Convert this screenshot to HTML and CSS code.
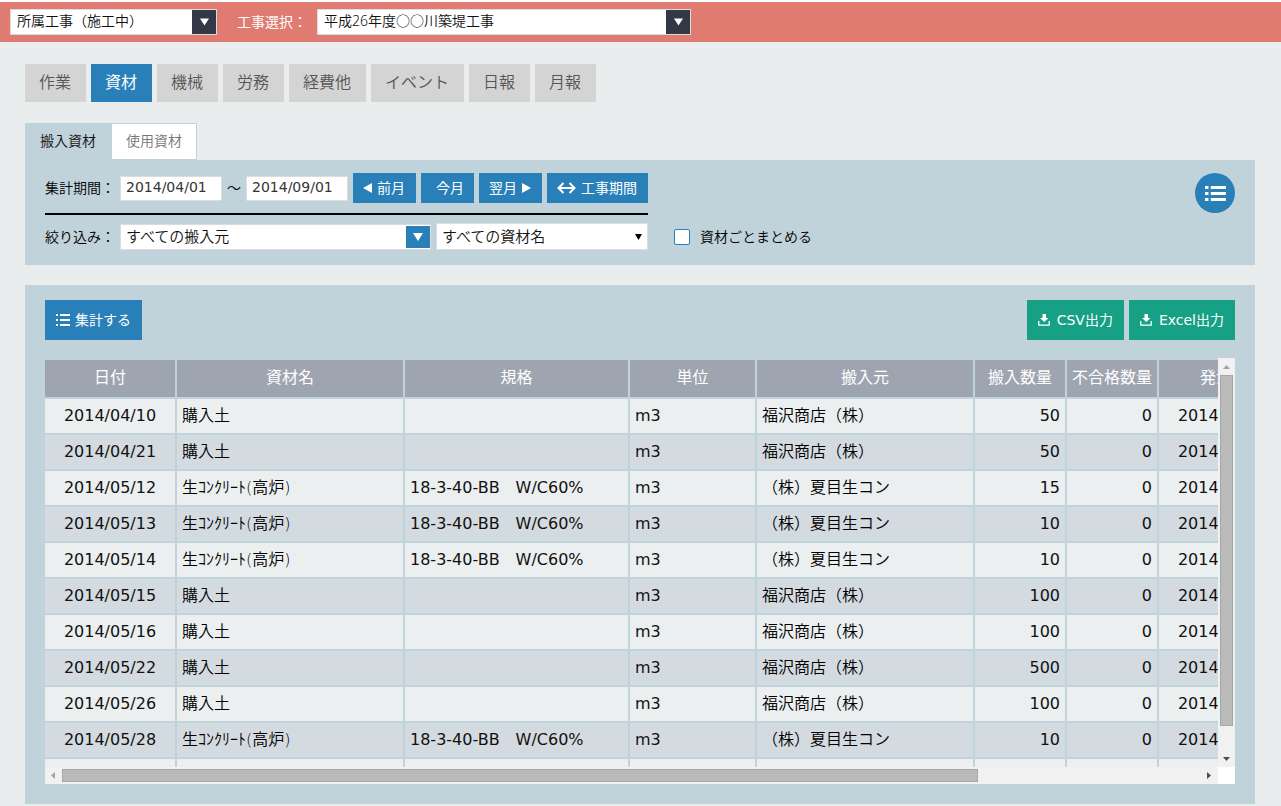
FILE: index.html
```html
<!DOCTYPE html>
<html lang="ja">
<head>
<meta charset="utf-8">
<title>搬入資材</title>
<link rel="stylesheet" href="styles.css">
</head>
<body>
<svg class="defs" aria-hidden="true">
  <symbol id="down" viewBox="0 0 10 8"><path d="M0 0h10L5 8z" fill="currentColor"/></symbol>
  <symbol id="list-thin" viewBox="0 0 14 12"><path d="M0 0h2v2H0zM4 0h10v2H4zM0 5h2v2H0zM4 5h10v2H4zM0 10h2v2H0zM4 10h10v2H4z" fill="currentColor"/></symbol>
  <symbol id="download" viewBox="0 0 12 12"><path d="M4.500 0h3.500v4h2.500L6.250 8 2 4h2.500z" fill="currentColor"/><path d="M.75 7v4.200h10.500V7" fill="none" stroke="currentColor" stroke-width="1.300"/></symbol>
</svg>

<header class="topbar">
  <div class="select select-kind">
    <select aria-label="工事区分"><option>所属工事（施工中）</option></select>
    <span class="arrow"><svg width="9" height="8"><use href="#down"/></svg></span>
  </div>
  <label for="project">工事選択：</label>
  <div class="select select-project">
    <select id="project"><option>平成26年度○○川築堤工事</option></select>
    <span class="arrow"><svg width="9" height="8"><use href="#down"/></svg></span>
  </div>
</header>

<main class="content">
  <nav class="tabs">
    <a href="#">作業</a>
    <a href="#" class="active">資材</a>
    <a href="#">機械</a>
    <a href="#">労務</a>
    <a href="#">経費他</a>
    <a href="#">イベント</a>
    <a href="#">日報</a>
    <a href="#">月報</a>
  </nav>

  <nav class="subtabs">
    <a href="#" class="active">搬入資材</a>
    <a href="#">使用資材</a>
  </nav>

  <section class="panel filter">
    <div class="filter-grid">
      <div class="row period">
        <label class="caption" for="from">集計期間：</label>
        <input class="date" id="from" type="text" value="2014/04/01">
        <span class="tilde">～</span>
        <input class="date" type="text" value="2014/09/01" aria-label="終了日">
        <button class="btn month"><svg width="9" height="10" viewBox="0 0 9 10"><path d="M9 0v10L0 5z" fill="currentColor"/></svg>前月</button>
        <button class="btn this-month">今月</button>
        <button class="btn month">翌月<svg width="9" height="10" viewBox="0 0 9 10"><path d="M0 0v10l9-5z" fill="currentColor"/></svg></button>
        <button class="btn span"><svg width="19" height="12" viewBox="0 0 19 12"><path d="M2 6h15M6.500 1L1.500 6l5 5M12.500 1l5 5-5 5" fill="none" stroke="currentColor" stroke-width="2"/></svg>工事期間</button>
      </div>
      <div class="row narrow">
        <label class="caption" for="source">絞り込み：</label>
        <div class="select select-source">
          <select id="source"><option>すべての搬入元</option></select>
          <span class="arrow"><svg width="10" height="8"><use href="#down"/></svg></span>
        </div>
        <div class="select select-material">
          <select aria-label="資材名"><option>すべての資材名</option></select>
          <span class="arrow"><svg width="7" height="6" viewBox="0 0 7 6"><path d="M0 0h7L3.500 6z" fill="currentColor"/></svg></span>
        </div>
      </div>
      <label class="group"><input type="checkbox">資材ごとまとめる</label>
    </div>
    <button class="round" aria-label="一覧"><svg width="21" height="15" viewBox="0 0 21 15"><path d="M0 0h3v3H0zM5 0h13v3H5zM0 6h3v3H0zM5 6h13v3H5zM0 12h3v3H0zM5 12h13v3H5z" transform="scale(1.160 1)" fill="currentColor"/></svg></button>
  </section>

  <section class="panel result">
    <div class="actions">
      <button class="btn tall"><svg width="14" height="12"><use href="#list-thin"/></svg>集計する</button>
      <div class="exports">
        <button class="btn tall green"><svg width="12" height="12"><use href="#download"/></svg>CSV出力</button>
        <button class="btn tall green"><svg width="12" height="12"><use href="#download"/></svg>Excel出力</button>
      </div>
    </div>
    <div class="scroller">
      <div class="viewport">
        <table>
          <colgroup><col class="c-date"><col class="c-name"><col class="c-spec"><col class="c-unit"><col class="c-source"><col class="c-qty"><col class="c-qty"><col class="c-date"></colgroup>
          <thead>
            <tr><th>日付</th><th>資材名</th><th>規格</th><th>単位</th><th>搬入元</th><th>搬入数量</th><th>不合格数量</th><th>発注日</th></tr>
          </thead>
          <tbody>
            <tr><td>2014/04/10</td><td>購入土</td><td></td><td>m3</td><td>福沢商店（株）</td><td>50</td><td>0</td><td>2014/04/10</td></tr>
            <tr><td>2014/04/21</td><td>購入土</td><td></td><td>m3</td><td>福沢商店（株）</td><td>50</td><td>0</td><td>2014/04/21</td></tr>
            <tr><td>2014/05/12</td><td>生ｺﾝｸﾘｰﾄ(高炉)</td><td>18-3-40-BB　W/C60%</td><td>m3</td><td>（株）夏目生コン</td><td>15</td><td>0</td><td>2014/05/12</td></tr>
            <tr><td>2014/05/13</td><td>生ｺﾝｸﾘｰﾄ(高炉)</td><td>18-3-40-BB　W/C60%</td><td>m3</td><td>（株）夏目生コン</td><td>10</td><td>0</td><td>2014/05/13</td></tr>
            <tr><td>2014/05/14</td><td>生ｺﾝｸﾘｰﾄ(高炉)</td><td>18-3-40-BB　W/C60%</td><td>m3</td><td>（株）夏目生コン</td><td>10</td><td>0</td><td>2014/05/14</td></tr>
            <tr><td>2014/05/15</td><td>購入土</td><td></td><td>m3</td><td>福沢商店（株）</td><td>100</td><td>0</td><td>2014/05/15</td></tr>
            <tr><td>2014/05/16</td><td>購入土</td><td></td><td>m3</td><td>福沢商店（株）</td><td>100</td><td>0</td><td>2014/05/16</td></tr>
            <tr><td>2014/05/22</td><td>購入土</td><td></td><td>m3</td><td>福沢商店（株）</td><td>500</td><td>0</td><td>2014/05/22</td></tr>
            <tr><td>2014/05/26</td><td>購入土</td><td></td><td>m3</td><td>福沢商店（株）</td><td>100</td><td>0</td><td>2014/05/26</td></tr>
            <tr><td>2014/05/28</td><td>生ｺﾝｸﾘｰﾄ(高炉)</td><td>18-3-40-BB　W/C60%</td><td>m3</td><td>（株）夏目生コン</td><td>10</td><td>0</td><td>2014/05/28</td></tr>
            <tr><td></td><td></td><td></td><td></td><td></td><td></td><td></td><td></td></tr>
          </tbody>
        </table>
      </div>
      <div class="bar vertical">
        <svg width="7" height="4" viewBox="0 0 7 4"><path d="M0 4h7L3.500 0z" fill="#a3a3a3"/></svg>
        <div class="track"><div class="thumb"></div></div>
        <svg width="7" height="4" viewBox="0 0 7 4"><path d="M0 0h7L3.500 4z" fill="#505050"/></svg>
      </div>
      <div class="bar horizontal">
        <svg width="4" height="7" viewBox="0 0 4 7"><path d="M4 0v7L0 3.500z" fill="#a3a3a3"/></svg>
        <div class="track"><div class="thumb"></div></div>
        <svg width="4" height="7" viewBox="0 0 4 7"><path d="M0 0v7l4-3.500z" fill="#505050"/></svg>
      </div>
      <div class="corner"></div>
    </div>
  </section>
</main>
</body>
</html>
```

FILE: styles.css
```css
* { box-sizing: border-box; }

body {
  margin: 0;
  background: #e9edee;
  color: #000;
  border-top: 2px solid #fff;
  font-family: "Noto Sans", "Noto Sans CJK JP", sans-serif;
  font-size: 14px;
  font-weight: 350;
  line-height: 20px;
}

.defs { display: none; }

a { color: inherit; text-decoration: none; }

button, input, select { font: inherit; margin: 0; }

/* Drop-downs */
.select { position: relative; }

.select select {
  display: block;
  width: 100%;
  height: 26px;
  padding: 0 30px 2px 6px;
  border: 1px solid #dcdcdc;
  border-radius: 0;
  background: #fff;
  color: #111;
  appearance: none;
}

.arrow {
  position: absolute;
  top: 1px;
  right: 1px;
  bottom: 1px;
  width: 24px;
  display: flex;
  align-items: center;
  justify-content: center;
  background: #323845;
  color: #fff;
  pointer-events: none;
}

/* Top bar */
.topbar {
  display: flex;
  align-items: center;
  height: 40px;
  padding: 0 10px;
  background: #df7b71;
  color: #fff;
}

.topbar label { padding: 0 10px 0 20px; font-weight: 400; }
.select-kind { width: 207px; }
.select-project { width: 374px; }

.content { padding: 22px 26px 2px 25px; }

/* Tabs */
.tabs { display: flex; gap: 5px; margin-bottom: 21px; }

.tabs a {
  padding: 6px 15px 8px 14px;
  background: #d4d4d4;
  color: #555;
  font-size: 16px;
  line-height: 24px;
}

.tabs a.active { background: #2980b9; color: #fff; font-weight: 400; }

.subtabs { display: flex; }

.subtabs a {
  padding: 7px 14px 8px;
  border: solid #c0d2da;
  border-width: 1px 1px 1px 0;
  background: #fff;
  color: #777;
}

.subtabs a.active { padding: 7px 15px 8px; background: #c0d2da; color: #111; }

.panel { background: #c0d2da; }

/* Filter */
.filter {
  display: flex;
  justify-content: space-between;
  align-items: flex-start;
  padding: 13px 20px 15px;
}

.filter-grid {
  display: grid;
  grid-template-columns: auto auto;
  column-gap: 26px;
  row-gap: 8px;
}

.row { display: flex; align-items: center; gap: 5px; }
.period { padding-bottom: 10px; border-bottom: 2px solid #000; }
.narrow { grid-row: 2; align-items: flex-end; }
.caption { width: 70px; }
.narrow .caption { line-height: 26px; }
.tilde { width: 14px; }

.date {
  width: 102px;
  height: 25px;
  padding: 0 5px 2px;
  border: 1px solid #dcdcdc;
  background: #fff;
  color: #333;
  font-family: "DejaVu Sans", sans-serif;
  font-weight: 400;
}

.btn {
  display: flex;
  align-items: center;
  gap: 5px;
  height: 30px;
  padding: 0 10px;
  border: 0;
  background: #2980b9;
  color: #fff;
  font-weight: 400;
  white-space: nowrap;
}

.month { width: 63px; }
.this-month { width: 53px; padding-left: 15px; }
.span { width: 101px; }

.select-source { width: 311px; }
.select-material { width: 212px; }
.select-source select, .select-material select { padding-left: 5px; font-size: 15px; }
.select-material select { height: 27px; }
.select-source .arrow { top: 2px; bottom: 2px; background: #2980b9; }
.select-material .arrow { width: 18px; background: none; color: #000; }

.group { grid-row: 2; display: flex; align-items: center; gap: 10px; }

.group input {
  appearance: none;
  width: 16px;
  height: 16px;
  border: 1px solid #2980b9;
  border-radius: 2px;
  background: #fff;
}

.round {
  display: flex;
  align-items: center;
  justify-content: center;
  width: 40px;
  height: 40px;
  padding: 0;
  border: 0;
  border-radius: 50%;
  background: #2980b9;
  color: #fff;
}

/* Result */
.result { margin-top: 20px; padding: 15px 20px 20px; }
.actions { display: flex; justify-content: space-between; margin-bottom: 18px; }
.exports { display: flex; gap: 5px; }
.tall { height: 40px; padding: 0 11px; }
.green { background: #16a085; gap: 7px; font-family: "DejaVu Sans", "Noto Sans CJK JP", sans-serif; }

.scroller {
  display: grid;
  grid-template-columns: minmax(0, 1fr) 17px;
  grid-template-rows: 409px 17px;
}

.viewport { overflow: hidden; padding-top: 2px; }

table {
  width: 1246px;
  table-layout: fixed;
  border-spacing: 0;
  font-family: "DejaVu Sans", "Noto Sans CJK JP", sans-serif;
  font-size: 16px;
  font-weight: 400;
  line-height: 24px;
}

.c-date { width: 132px; }
.c-name { width: 228px; }
.c-spec { width: 225px; }
.c-unit { width: 127px; }
.c-source { width: 218px; }
.c-qty { width: 92px; }

th, td {
  height: 36px;
  padding: 0 5px;
  border: solid #c0d2da;
  border-width: 0 2px 2px 0;
  white-space: nowrap;
}

th {
  height: 39px;
  padding: 0 0 2px;
  background: #9ea5b1;
  color: #fff;
  font-weight: 400;
}

td { background: #ebefef; color: #111; }
tbody tr:nth-child(even) td { background: #d3dbe0; }
td:first-child, td:last-child { text-align: center; }
td:nth-child(2), td:nth-child(5) { font-weight: 350; color: #000; }
td:nth-child(6), td:nth-child(7) { text-align: right; }

.bar { display: flex; align-items: center; background: #f1f1f1; }
.bar svg { flex: none; }
.track { flex: 1; align-self: stretch; display: flex; }
.thumb { background: #bababa; border: 1px solid #a6a6a6; }
.vertical { flex-direction: column; padding: 7px 0 6px; }
.vertical .track { margin: 6px 2px 7px; flex-direction: column; }
.vertical .thumb { height: 93.5%; }
.horizontal { padding: 0 7px 0 6px; }
.horizontal .track { margin: 2px 6px 2px 7px; }
.horizontal .thumb { width: 80.4%; }
.corner { background: #fff; }
```
